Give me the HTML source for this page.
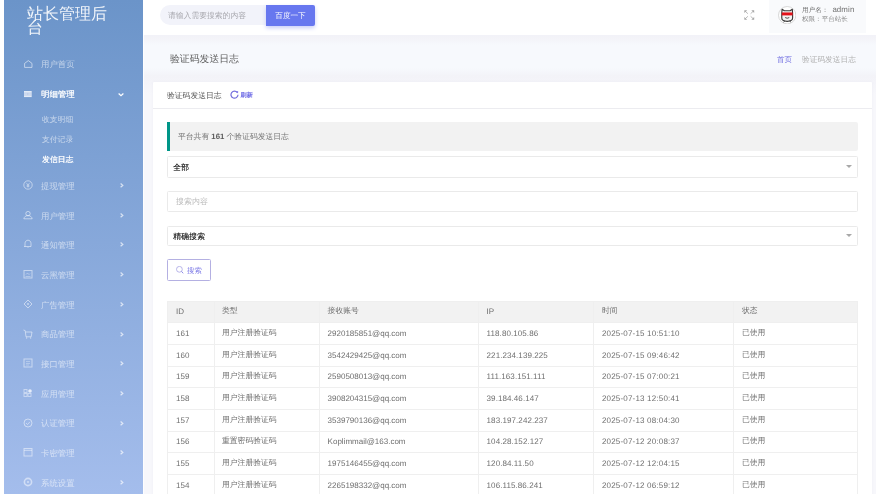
<!DOCTYPE html>
<html><head><meta charset="utf-8">
<style>
*{box-sizing:border-box;margin:0;padding:0}
html,body{width:876px;height:494px;overflow:hidden;background:#fff;font-family:"Liberation Sans",sans-serif;text-rendering:geometricPrecision}
#side{position:absolute;left:4px;top:0;width:139px;height:494px;background:linear-gradient(#6b94c9,#a4bdec)}
#logo{position:absolute;left:23px;top:7.7px;width:84px;color:rgba(255,255,255,.9);font-size:16px;line-height:14px;word-break:break-all}
.mt{position:absolute;left:37px;font-size:8.4px;line-height:10px;color:rgba(255,255,255,.58);white-space:nowrap}
#hdr{position:absolute;left:143px;top:0;width:733px;height:35px;background:#fff}
#main{position:absolute;left:143px;top:35px;width:733px;height:459px;background:#f7f8fc;background-image:linear-gradient(#f2f2f8 0px,#f3f3f8 3px,#f7f9fd 10px,#f7f9fd 33px,#f3f3f8 41px,#f4f4f9 47px,#f7f7fb 60px)}
#hsh{display:none}
#card{position:absolute;left:153px;top:81.5px;width:719px;height:420px;background:#fff;border-radius:1px;box-shadow:0 0 3px rgba(60,60,110,.05)}
.txt{position:absolute;white-space:nowrap}
.box{position:absolute;border:1px solid #eaeaea;background:#fff;border-radius:1.5px}
table{position:absolute;left:167px;top:300.5px;border-collapse:collapse;width:691px;font-size:8px;color:#6e6e6e;table-layout:fixed}
td,th{border:1px solid #efefef;height:21.7px;padding:0 0 0 8px;text-align:left;font-weight:normal;white-space:nowrap;overflow:hidden}
th{background:#f2f2f2;font-size:7.8px}
td.cj{font-size:7.8px}
tr td:nth-child(2),tr th:nth-child(2){padding-left:7px}
td.dt{letter-spacing:.18px}
td.ip{letter-spacing:.08px}
</style></head><body><div id="wrap" style="position:absolute;left:0;top:0;width:876px;height:494px;will-change:transform">
<div id="side">
<div id="logo">站长管理后台</div>
<svg style="position:absolute;left:19.6px;top:59.9px;width:8.6px;height:8px;overflow:visible" viewBox="0 0 8.6 8"><path d="M0.6 3.4L4.3 0.6L8 3.4V7.4H0.6Z" fill="none" stroke="rgba(255,255,255,.55)" stroke-width="1" stroke-linejoin="round"/></svg>
<div class="mt" style="top:59.1px">用户首页</div>
<svg style="position:absolute;left:19.9px;top:90.9px;width:7.7px;height:6.1px;overflow:visible" viewBox="0 0 7.7 6.1"><rect x="0" y="0" width="7.7" height="6.1" fill="rgba(255,255,255,.8)"/><path d="M0 2.1H7.7M0 4H7.7" stroke="rgba(150,175,220,.9)" stroke-width=".6"/><path d="M3.8 2V4" stroke="rgba(150,175,220,.6)" stroke-width=".5"/></svg>
<div class="mt" style="top:88.9px;color:rgba(255,255,255,.96);text-shadow:.35px 0 0 rgba(255,255,255,.9)">明细管理</div>
<svg style="position:absolute;left:114px;top:92.8px;width:6px;height:3.2px;overflow:visible" viewBox="0 0 6 3.2"><path d="M0.6 0.5L3 2.7L5.4 0.5" fill="none" stroke="#fff" stroke-width="1.2"/></svg>
<div class="mt" style="top:114.6px;left:38px;font-size:7.8px">收支明细</div>
<div class="mt" style="top:135.2px;left:38px;font-size:7.8px">支付记录</div>
<div class="mt" style="top:155.3px;left:38px;font-size:7.8px;color:#fff;text-shadow:.35px 0 0 rgba(255,255,255,.9)">发信日志</div>
<svg style="position:absolute;left:18.9px;top:180.0px;width:10px;height:10px;overflow:visible" viewBox="0 0 10 10"><circle cx="5" cy="5" r="4.2" fill="none" stroke="rgba(255,255,255,.5)" stroke-width="1"/><path d="M3.3 2.8L5 5L6.7 2.8M5 5V7.6M3.6 5.2H6.4M3.6 6.3H6.4" fill="none" stroke="rgba(255,255,255,.5)" stroke-width=".8"/></svg>
<div class="mt" style="top:180.8px">提现管理</div>
<svg style="position:absolute;left:115.8px;top:183.0px;width:3.4px;height:4.8px;overflow:visible" viewBox="0 0 3.4 4.8"><path d="M0.6 0.5L2.8 2.4L0.6 4.3" fill="none" stroke="rgba(255,255,255,.68)" stroke-width="1.25"/></svg>
<svg style="position:absolute;left:18.9px;top:209.7px;width:10px;height:10px;overflow:visible" viewBox="0 0 10 10"><circle cx="5" cy="3.6" r="2.2" fill="none" stroke="rgba(255,255,255,.5)" stroke-width="1"/><path d="M0.8 8.8C1.2 6.6 3 5.6 5 5.6C7 5.6 8.8 6.6 9.2 8.8Z" fill="none" stroke="rgba(255,255,255,.5)" stroke-width="1"/></svg>
<div class="mt" style="top:210.5px">用户管理</div>
<svg style="position:absolute;left:115.8px;top:212.7px;width:3.4px;height:4.8px;overflow:visible" viewBox="0 0 3.4 4.8"><path d="M0.6 0.5L2.8 2.4L0.6 4.3" fill="none" stroke="rgba(255,255,255,.68)" stroke-width="1.25"/></svg>
<svg style="position:absolute;left:18.9px;top:239.4px;width:10px;height:10px;overflow:visible" viewBox="0 0 10 10"><path d="M2 7.5V4.5C2 2.6 3.3 1.2 5 1.2C6.7 1.2 8 2.6 8 4.5V7.5H1M5 8.2V9" fill="none" stroke="rgba(255,255,255,.5)" stroke-width="1"/></svg>
<div class="mt" style="top:240.2px">通知管理</div>
<svg style="position:absolute;left:115.8px;top:242.4px;width:3.4px;height:4.8px;overflow:visible" viewBox="0 0 3.4 4.8"><path d="M0.6 0.5L2.8 2.4L0.6 4.3" fill="none" stroke="rgba(255,255,255,.68)" stroke-width="1.25"/></svg>
<svg style="position:absolute;left:18.9px;top:269.1px;width:10px;height:10px;overflow:visible" viewBox="0 0 10 10"><rect x="1" y="1.5" width="8" height="7.5" fill="none" stroke="rgba(255,255,255,.5)" stroke-width="1"/><path d="M3 5.5L4.5 4L6 5.5L7 4.5M2.5 7.5H7.5" fill="none" stroke="rgba(255,255,255,.5)" stroke-width=".7"/></svg>
<div class="mt" style="top:269.9px">云黑管理</div>
<svg style="position:absolute;left:115.8px;top:272.1px;width:3.4px;height:4.8px;overflow:visible" viewBox="0 0 3.4 4.8"><path d="M0.6 0.5L2.8 2.4L0.6 4.3" fill="none" stroke="rgba(255,255,255,.68)" stroke-width="1.25"/></svg>
<svg style="position:absolute;left:18.9px;top:298.8px;width:10px;height:10px;overflow:visible" viewBox="0 0 10 10"><path d="M5 1L9 5L5 9L1 5Z" fill="none" stroke="rgba(255,255,255,.5)" stroke-width="1"/><circle cx="5" cy="5" r="1" fill="rgba(255,255,255,.5)"/></svg>
<div class="mt" style="top:299.6px">广告管理</div>
<svg style="position:absolute;left:115.8px;top:301.8px;width:3.4px;height:4.8px;overflow:visible" viewBox="0 0 3.4 4.8"><path d="M0.6 0.5L2.8 2.4L0.6 4.3" fill="none" stroke="rgba(255,255,255,.68)" stroke-width="1.25"/></svg>
<svg style="position:absolute;left:18.9px;top:328.5px;width:10px;height:10px;overflow:visible" viewBox="0 0 10 10"><path d="M0.5 1L2.2 1.6L3 7.8H8.2L9 3H2.6" fill="none" stroke="rgba(255,255,255,.5)" stroke-width="1"/><circle cx="3.6" cy="9" r=".7" fill="rgba(255,255,255,.5)"/><circle cx="7.6" cy="9" r=".7" fill="rgba(255,255,255,.5)"/></svg>
<div class="mt" style="top:329.3px">商品管理</div>
<svg style="position:absolute;left:115.8px;top:331.5px;width:3.4px;height:4.8px;overflow:visible" viewBox="0 0 3.4 4.8"><path d="M0.6 0.5L2.8 2.4L0.6 4.3" fill="none" stroke="rgba(255,255,255,.68)" stroke-width="1.25"/></svg>
<svg style="position:absolute;left:18.9px;top:358.2px;width:10px;height:10px;overflow:visible" viewBox="0 0 10 10"><rect x="1" y="1" width="8" height="8" fill="none" stroke="rgba(255,255,255,.5)" stroke-width="1"/><path d="M3 3.5H7M3 5.5H7M3 7H6" fill="none" stroke="rgba(255,255,255,.5)" stroke-width=".6"/></svg>
<div class="mt" style="top:359.0px">接口管理</div>
<svg style="position:absolute;left:115.8px;top:361.2px;width:3.4px;height:4.8px;overflow:visible" viewBox="0 0 3.4 4.8"><path d="M0.6 0.5L2.8 2.4L0.6 4.3" fill="none" stroke="rgba(255,255,255,.68)" stroke-width="1.25"/></svg>
<svg style="position:absolute;left:18.9px;top:387.9px;width:10px;height:10px;overflow:visible" viewBox="0 0 10 10"><rect x="1" y="1.5" width="3" height="3" fill="none" stroke="rgba(255,255,255,.5)" stroke-width=".9"/><rect x="1" y="5.5" width="3" height="3" fill="none" stroke="rgba(255,255,255,.5)" stroke-width=".9"/><rect x="5" y="5.5" width="3" height="3" fill="none" stroke="rgba(255,255,255,.5)" stroke-width=".9"/><circle cx="7" cy="3" r="1.8" fill="rgba(255,255,255,.75)"/></svg>
<div class="mt" style="top:388.7px">应用管理</div>
<svg style="position:absolute;left:115.8px;top:390.9px;width:3.4px;height:4.8px;overflow:visible" viewBox="0 0 3.4 4.8"><path d="M0.6 0.5L2.8 2.4L0.6 4.3" fill="none" stroke="rgba(255,255,255,.68)" stroke-width="1.25"/></svg>
<svg style="position:absolute;left:18.9px;top:417.6px;width:10px;height:10px;overflow:visible" viewBox="0 0 10 10"><circle cx="5" cy="5" r="4" fill="none" stroke="rgba(255,255,255,.5)" stroke-width="1"/><path d="M3 5L4.5 6.5L7 3.8" fill="none" stroke="rgba(255,255,255,.5)" stroke-width=".9"/></svg>
<div class="mt" style="top:418.4px">认证管理</div>
<svg style="position:absolute;left:115.8px;top:420.6px;width:3.4px;height:4.8px;overflow:visible" viewBox="0 0 3.4 4.8"><path d="M0.6 0.5L2.8 2.4L0.6 4.3" fill="none" stroke="rgba(255,255,255,.68)" stroke-width="1.25"/></svg>
<svg style="position:absolute;left:18.9px;top:447.3px;width:10px;height:10px;overflow:visible" viewBox="0 0 10 10"><rect x="1" y="1.5" width="8" height="7.5" fill="none" stroke="rgba(255,255,255,.5)" stroke-width="1"/><path d="M1 3.3H9" stroke="rgba(255,255,255,.5)" stroke-width="1"/></svg>
<div class="mt" style="top:448.1px">卡密管理</div>
<svg style="position:absolute;left:115.8px;top:450.3px;width:3.4px;height:4.8px;overflow:visible" viewBox="0 0 3.4 4.8"><path d="M0.6 0.5L2.8 2.4L0.6 4.3" fill="none" stroke="rgba(255,255,255,.68)" stroke-width="1.25"/></svg>
<svg style="position:absolute;left:18.9px;top:477.0px;width:10px;height:10px;overflow:visible" viewBox="0 0 10 10"><circle cx="5" cy="5" r="3.6" fill="none" stroke="rgba(255,255,255,.5)" stroke-width="1.6"/><circle cx="5" cy="5" r="1" fill="rgba(255,255,255,.5)"/></svg>
<div class="mt" style="top:477.8px">系统设置</div>
<svg style="position:absolute;left:115.8px;top:480.0px;width:3.4px;height:4.8px;overflow:visible" viewBox="0 0 3.4 4.8"><path d="M0.6 0.5L2.8 2.4L0.6 4.3" fill="none" stroke="rgba(255,255,255,.68)" stroke-width="1.25"/></svg>
</div>
<div id="hdr">
</div>
<div id="main"></div><div id="hsh"></div><div style="position:absolute;left:143px;top:35px;width:1px;height:459px;background:#fdfdfe"></div>
<div id="card"></div>
<!-- header search -->
<div class="txt" style="left:159.7px;top:5.1px;width:107px;height:20.2px;background:#f2f3fa;border-radius:10px 0 0 10px"></div>
<div class="txt" style="left:168px;top:5.8px;line-height:20px;font-size:7.8px;color:#a8a8ae">请输入需要搜索的内容</div>
<div class="txt" style="left:266px;top:5px;width:49px;height:20.5px;background:#6777ef;border-radius:0 2px 2px 0;box-shadow:0 2px 4px #c7ccf8;color:#fff;font-size:7.6px;line-height:22px;text-align:center">百度一下</div>
<div class="txt" style="left:769px;top:0;width:97px;height:33px;background:#f9fafc"></div>
<div class="txt" style="left:802px;top:5.1px;line-height:9px;font-size:6.6px;color:#707070">用户名：<span style="font-size:7.9px;letter-spacing:.1px;margin-left:4px">admin</span></div>
<div class="txt" style="left:802px;top:15.4px;line-height:9px;font-size:6.55px;color:#888">权限：平台站长</div>
<!-- fullscreen -->
<svg style="position:absolute;left:744px;top:9.5px;width:10.5px;height:10px" viewBox="0 0 10.5 10"><g stroke="#b0b0b0" stroke-width=".9" fill="none"><path d="M1.2 1.2L3.9 3.7M9.3 1.2L6.6 3.7M1.2 8.8L3.9 6.3M9.3 8.8L6.6 6.3"/></g><g fill="#a8a8a8"><path d="M0.3 0.3H3.2L0.3 3Z"/><path d="M10.2 0.3H7.3L10.2 3Z"/><path d="M0.3 9.7H3.2L0.3 7Z"/><path d="M10.2 9.7H7.3L10.2 7Z"/></g></svg>
<!-- avatar -->
<svg style="position:absolute;left:778px;top:6px;width:18.4px;height:18.4px" viewBox="0 0 18 18"><circle cx="9" cy="9" r="8.5" fill="#fff" stroke="#d3d3d3" stroke-width=".9"/>
<path d="M4 3.2L6.2 4.6H11.8L14 3.2L14.3 7V11.8C14.3 13.8 12.4 15 9 15C5.6 15 3.7 13.8 3.7 11.8V7Z" fill="#f3f3f3" stroke="#383838" stroke-width="1.1" stroke-linejoin="round"/>
<rect x="3.7" y="6.3" width="10.6" height="2.9" fill="#e3121b"/>
<path d="M5.3 15.8L6.8 14.6M12.7 15.8L11.2 14.6M7 11.3L9 12L11 11.3" fill="none" stroke="#404040" stroke-width=".9"/></svg>
<!-- title -->
<div class="txt" style="left:170px;top:52.5px;font-size:9.85px;line-height:14px;color:#5c5c5c">验证码发送日志</div>
<div class="txt" style="left:777px;top:53.6px;font-size:7.5px;line-height:12px;color:#6d6be0">首页</div>
<div class="txt" style="left:802px;top:53.6px;font-size:7.7px;line-height:12px;color:#b0b0b0">验证码发送日志</div>
<!-- card header -->
<div class="txt" style="left:167px;top:90px;font-size:7.8px;line-height:12px;color:#555">验证码发送日志</div>
<div class="txt" style="left:240.5px;top:90px;font-size:6.2px;line-height:12px;color:#6d6ae6;font-weight:bold">刷新</div>
<svg style="position:absolute;left:229.5px;top:90.2px;width:9px;height:9px" viewBox="0 0 9 9"><path d="M7.3 2.6A3.5 3.5 0 1 0 8 4.8" fill="none" stroke="#7570dc" stroke-width="1.2"/><path d="M6.2 1.3L8.2 1.2L8 3.4Z" fill="#6f68ea"/></svg>
<div class="txt" style="left:153px;top:107.5px;width:719px;height:1px;background:#ececf0"></div>
<!-- quote -->
<div class="txt" style="left:167px;top:122px;width:691px;height:29px;background:#f2f2f2;border-left:3px solid #009688;border-radius:0 2px 2px 0"></div>
<div class="txt" style="left:178px;top:131px;font-size:7.8px;line-height:12px;color:#737373">平台共有 <b style="color:#5a5a5a">161</b> 个验证码发送日志</div>
<!-- selects -->
<div class="box" style="left:167px;top:156px;width:691px;height:21.5px"></div>
<svg style="position:absolute;left:846px;top:165px;width:6px;height:3px" viewBox="0 0 6 3"><path d="M0 0H6L3 3Z" fill="#a8a8a8"/></svg>
<div class="txt" style="left:173px;top:162px;font-size:8px;line-height:12px;color:#1a1a1a;text-shadow:.25px 0 0 rgba(0,0,0,.5)">全部</div>
<div class="box" style="left:167px;top:191px;width:691px;height:20.5px"></div>
<div class="txt" style="left:176px;top:196px;font-size:8px;line-height:12px;color:#bbb">搜索内容</div>
<div class="box" style="left:167px;top:225.5px;width:691px;height:20px"></div>
<svg style="position:absolute;left:846px;top:234px;width:6px;height:3px" viewBox="0 0 6 3"><path d="M0 0H6L3 3Z" fill="#a8a8a8"/></svg>
<div class="txt" style="left:173px;top:230.7px;font-size:8px;line-height:12px;color:#1a1a1a;text-shadow:.25px 0 0 rgba(0,0,0,.5)">精确搜索</div>
<div class="box" style="left:167px;top:259.2px;width:43.5px;height:22.3px;border-color:#b4b0e2"></div>
<div class="txt" style="left:187px;top:265.5px;font-size:7.4px;line-height:10px;color:#7b78e6">搜索</div>
<svg style="position:absolute;left:176px;top:266px;width:8px;height:8px" viewBox="0 0 8 8"><circle cx="3.4" cy="3.3" r="2.9" fill="none" stroke="#a7a3e3" stroke-width=".8"/><path d="M5.5 5.4L7.2 7.3" stroke="#8f8ae6" stroke-width="1"/></svg>
<table>
<colgroup><col style="width:47px"><col style="width:104.6px"><col style="width:159px"><col style="width:115.4px"><col style="width:140px"><col style="width:124.5px"></colgroup>
<tr><th style="font-size:8px">ID</th><th>类型</th><th>接收账号</th><th style="font-size:8px">IP</th><th>时间</th><th>状态</th></tr>
<tr><td>161</td><td class="cj">用户注册验证码</td><td>2920185851@qq.com</td><td class="ip">118.80.105.86</td><td class="dt">2025-07-15 10:51:10</td><td class="cj">已使用</td></tr>
<tr><td>160</td><td class="cj">用户注册验证码</td><td>3542429425@qq.com</td><td class="ip">221.234.139.225</td><td class="dt">2025-07-15 09:46:42</td><td class="cj">已使用</td></tr>
<tr><td>159</td><td class="cj">用户注册验证码</td><td>2590508013@qq.com</td><td class="ip">111.163.151.111</td><td class="dt">2025-07-15 07:00:21</td><td class="cj">已使用</td></tr>
<tr><td>158</td><td class="cj">用户注册验证码</td><td>3908204315@qq.com</td><td class="ip">39.184.46.147</td><td class="dt">2025-07-13 12:50:41</td><td class="cj">已使用</td></tr>
<tr><td>157</td><td class="cj">用户注册验证码</td><td>3539790136@qq.com</td><td class="ip">183.197.242.237</td><td class="dt">2025-07-13 08:04:30</td><td class="cj">已使用</td></tr>
<tr><td>156</td><td class="cj">重置密码验证码</td><td>Koplimmail@163.com</td><td class="ip">104.28.152.127</td><td class="dt">2025-07-12 20:08:37</td><td class="cj">已使用</td></tr>
<tr><td>155</td><td class="cj">用户注册验证码</td><td>1975146455@qq.com</td><td class="ip">120.84.11.50</td><td class="dt">2025-07-12 12:04:15</td><td class="cj">已使用</td></tr>
<tr><td>154</td><td class="cj">用户注册验证码</td><td>2265198332@qq.com</td><td class="ip">106.115.86.241</td><td class="dt">2025-07-12 06:59:12</td><td class="cj">已使用</td></tr>
</table>
</div></body></html>
